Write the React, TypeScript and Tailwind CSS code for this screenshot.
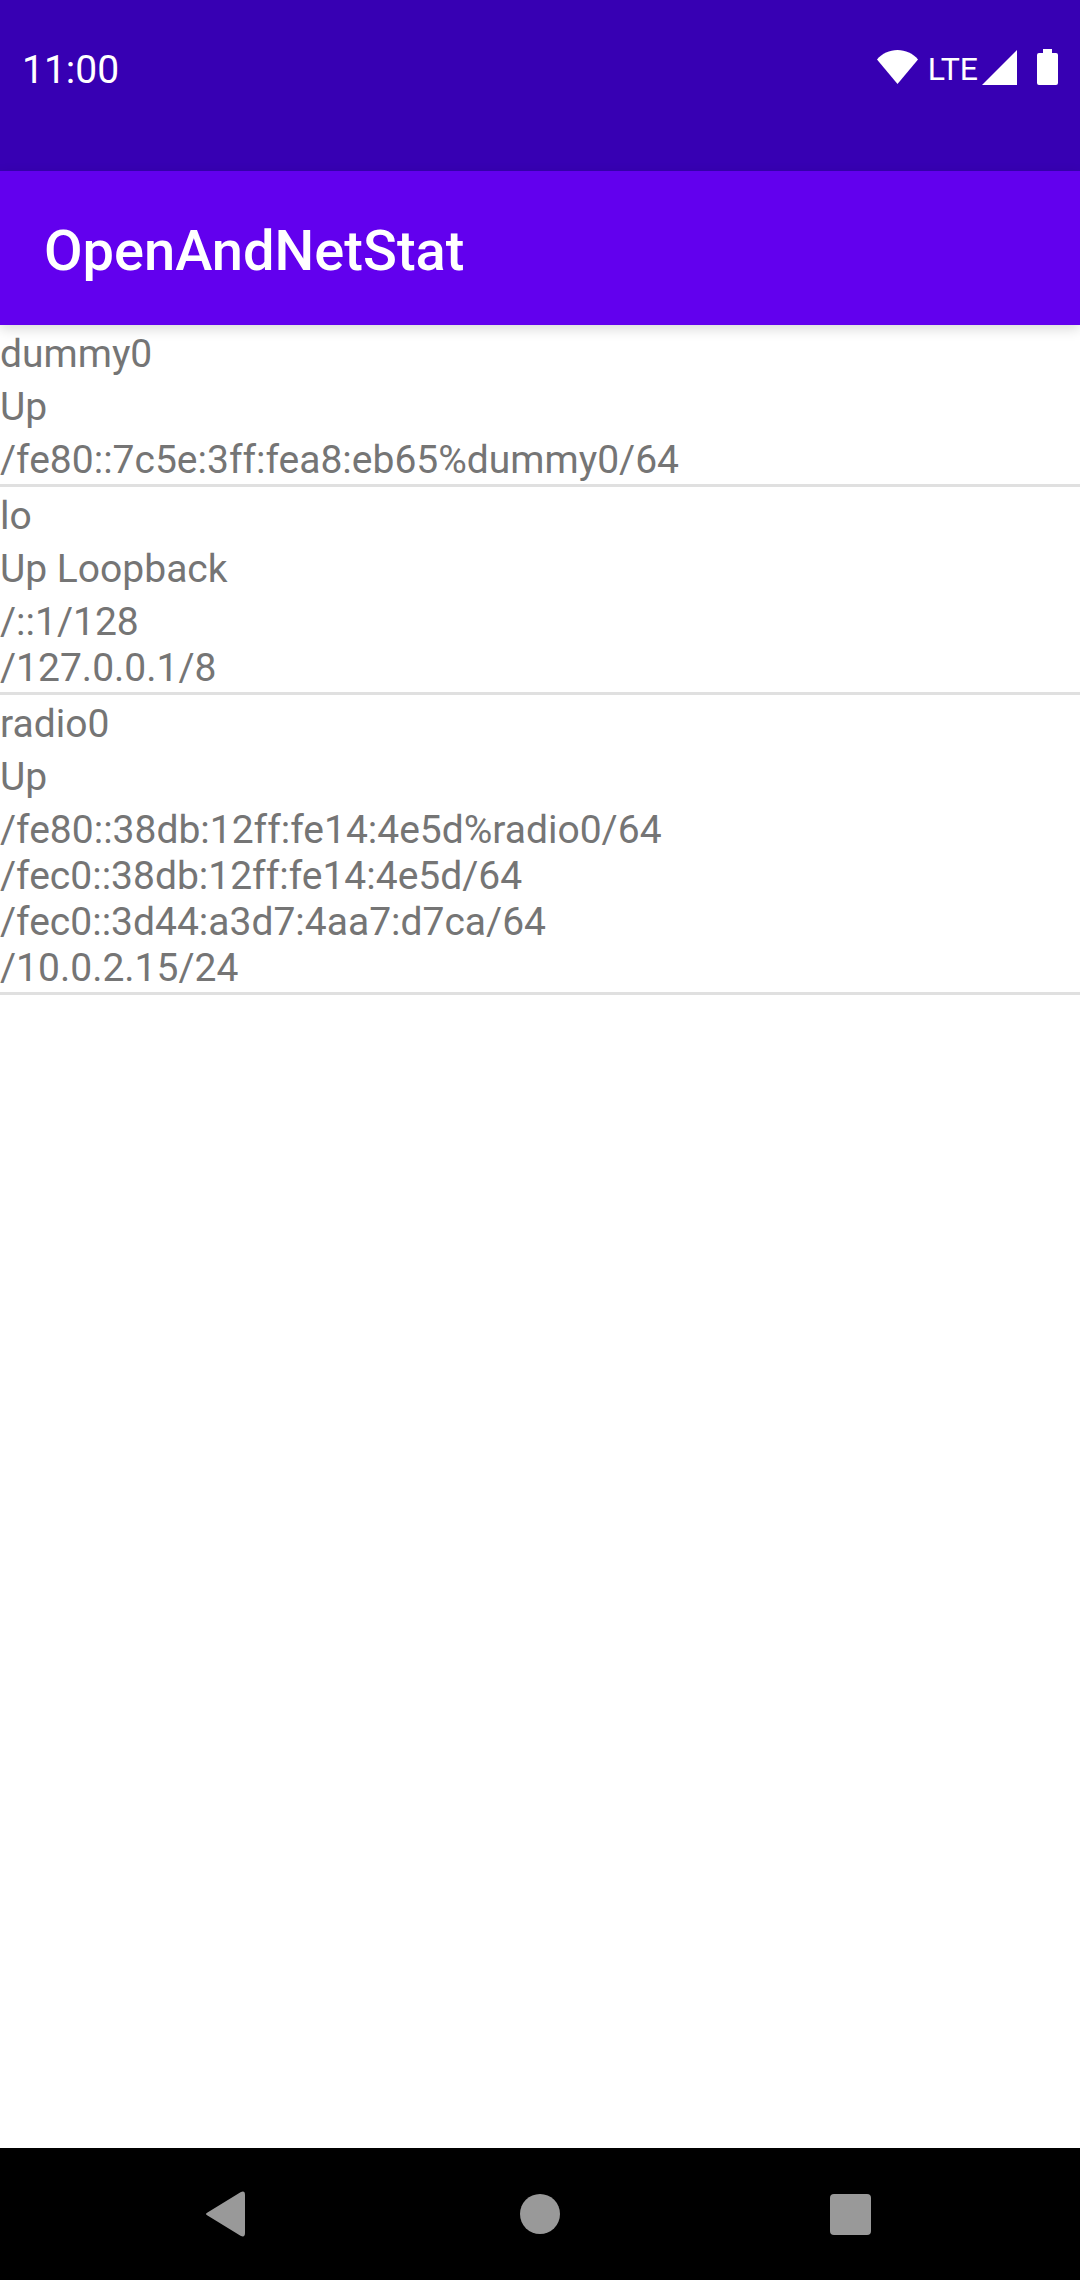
const interfaces = [
  { name: "dummy0", flags: "Up", addresses: ["/fe80::7c5e:3ff:fea8:eb65%dummy0/64"] },
  { name: "lo", flags: "Up Loopback", addresses: ["/::1/128", "/127.0.0.1/8"] },
  {
    name: "radio0",
    flags: "Up",
    addresses: [
      "/fe80::38db:12ff:fe14:4e5d%radio0/64",
      "/fec0::38db:12ff:fe14:4e5d/64",
      "/fec0::3d44:a3d7:4aa7:d7ca/64",
      "/10.0.2.15/24",
    ],
  },
];

function StatusBar() {
  return (
    <div className="flex h-[171px] items-start justify-between bg-[#3700b3] px-[22px] pt-11 text-white">
      <time className="text-[39px] leading-[52px]">11:00</time>
      <div className="flex h-[46px] items-center">
        <svg className="h-[34px] w-[41px]" viewBox="0 0 41 34" fill="currentColor" role="img" aria-label="Wi-Fi">
          <path d="M20.500 34 0 9.500C5 3.500 12.500 0 20.500 0S36 3.500 41 9.500z" />
        </svg>
        <span className="ml-2.5 pt-1 text-[32px] leading-[46px]">LTE</span>
        <svg className="ml-1 size-[35px]" viewBox="0 0 34 34" fill="currentColor" role="img" aria-label="Signal">
          <path d="M0 34 34 0v34z" />
        </svg>
        <svg className="ml-5 h-[36px] w-[21px]" viewBox="0 0 21 36" fill="currentColor" role="img" aria-label="Battery">
          <path d="M6 0h9v4h4q2 0 2 2v28q0 2-2 2H2q-2 0-2-2V6q0-2 2-2h4z" />
        </svg>
      </div>
    </div>
  );
}

export default function App() {
  return (
    <div className="flex min-h-screen flex-col bg-white font-['Roboto',sans-serif]">
      <StatusBar />
      <header className="z-10 flex h-[154px] items-center bg-[#6200ee] px-11 shadow-[0_4px_12px_rgba(0,0,0,0.15)]">
        <h1 className="pt-1.5 text-[56px] leading-[64px] font-medium text-white">OpenAndNetStat</h1>
      </header>
      <main className="flex-1 text-[39px] leading-[46px] text-[#757575]">
        <ul>
          {interfaces.map((item) => (
            <li key={item.name} className="border-b-3 border-[#e0e0e0] pb-px">
              <h2 className="pt-[6px]">{item.name}</h2>
              <p className="pt-[7px]">{item.flags}</p>
              <div className="pt-[7px]">
                {item.addresses.map((address) => (
                  <p key={address}>{address}</p>
                ))}
              </div>
            </li>
          ))}
        </ul>
      </main>
      <nav className="grid h-[132px] grid-cols-3 bg-black px-[75px] text-[#999999]">
        <button className="flex items-center justify-center" aria-label="Back">
          <svg className="size-12" viewBox="0 0 48 48" fill="currentColor">
            <path d="M1.500 22.500 34.500 2.300Q39 0 39 5v38q0 5-4.500 2.700L1.500 25.500q-3-1.500 0-3z" />
          </svg>
        </button>
        <button className="flex items-center justify-center" aria-label="Home">
          <span className="size-10 rounded-full bg-current" />
        </button>
        <button className="flex items-center justify-center" aria-label="Recent apps">
          <span className="size-[41px] rounded-[4px] bg-current" />
        </button>
      </nav>
    </div>
  );
}
